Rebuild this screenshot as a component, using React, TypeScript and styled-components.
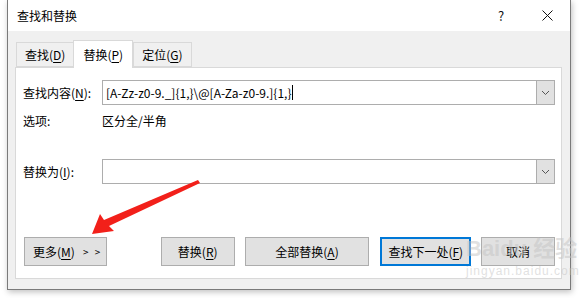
import React from "react";
import styled, { createGlobalStyle } from "styled-components";

const Global = createGlobalStyle`
  body {
    margin: 0;
    background: #ffffff;
    font-family: "Noto Sans CJK SC", "Microsoft YaHei", sans-serif;
    font-size: 12px;
    color: #000;
  }
`;

const Page = styled.div`
  position: relative;
  width: 579px;
  height: 298px;
  padding-left: 7px;
  box-sizing: border-box;
  overflow: hidden;
`;

const Window = styled.div`
  width: 564px;
  height: 290px;
  box-sizing: border-box;
  border: 1px solid #7a7a7a;
  border-top: none;
  background: #f0f0f0;
  box-shadow: 1px 2px 6px rgba(0, 0, 0, 0.25);
  display: flex;
  flex-direction: column;
`;

const TitleBar = styled.div`
  height: 31px;
  background: #ffffff;
  display: flex;
  align-items: center;
  padding-left: 9px;
  font-size: 12px;
`;

const Title = styled.div`
  flex: 1;
`;

const TitleButton = styled.div<{ w: number }>`
  width: ${(p) => p.w}px;
  height: 31px;
  display: flex;
  align-items: center;
  justify-content: center;
  font-size: 13px;
  color: #111;
`;

const Body = styled.div`
  flex: 1;
  padding: 9px 8px 10px 7px;
  display: flex;
  flex-direction: column;
`;

const Tabs = styled.div`
  display: flex;
  align-items: flex-end;
  height: 27px;
  padding-left: 1px;
`;

const Tab = styled.div<{ active?: boolean }>`
  box-sizing: border-box;
  height: ${(p) => (p.active ? 28 : 25)}px;
  margin-bottom: ${(p) => (p.active ? -1 : 0)}px;
  padding: 0 ${(p) => (p.active ? 9 : 8)}px;
  display: flex;
  align-items: center;
  background: ${(p) => (p.active ? "#ffffff" : "#f0f0f0")};
  border: 1px solid #d9d9d9;
  border-bottom: ${(p) => (p.active ? "none" : "1px solid #d9d9d9")};
  margin-left: ${(p) => (p.active ? -1 : 0)}px;
  position: relative;
  z-index: ${(p) => (p.active ? 1 : 0)};
  font-size: 12px;
`;

const U = styled.span`
  text-decoration: underline;
  text-underline-offset: 2px;
`;

const Panel = styled.div`
  flex: 1;
  background: #ffffff;
  border: 1px solid #d9d9d9;
  padding: 12px 6px 12px 7px;
  display: flex;
  flex-direction: column;
`;

const Row = styled.div<{ gap?: number }>`
  display: flex;
  align-items: center;
  margin-top: ${(p) => p.gap ?? 0}px;
`;

const OptionsRow = styled(Row)`
  height: 18px;
`;

const Label = styled.div`
  width: 79px;
  font-size: 12px;
`;

const Combo = styled.div`
  flex: 1;
  height: 25px;
  box-sizing: border-box;
  border: 1px solid #adadad;
  display: flex;
`;

const ComboText = styled.div`
  flex: 1;
  display: flex;
  align-items: center;
  padding-left: 3px;
  font-size: 12px;
  white-space: nowrap;
  overflow: hidden;
`;

const Caret = styled.span`
  display: inline-block;
  width: 1px;
  height: 15px;
  background: #000;
  margin-left: 1px;
`;

const DropButton = styled.div`
  width: 17px;
  background: #e1e1e1;
  border-left: 1px solid #adadad;
  display: flex;
  align-items: center;
  justify-content: center;
`;

const Buttons = styled.div`
  margin-top: auto;
  display: flex;
  align-items: center;
  padding-left: 1px;
`;

const Button = styled.div<{ w: number; ml?: number; focused?: boolean }>`
  width: ${(p) => p.w}px;
  margin-left: ${(p) => p.ml ?? 0}px;
  height: 29px;
  box-sizing: border-box;
  background: #e1e1e1;
  border: ${(p) => (p.focused ? "2px solid #0078d7" : "1px solid #adadad")};
  display: flex;
  align-items: center;
  justify-content: center;
  font-size: 12px;
`;

const MoreButton = styled(Button)`
  justify-content: flex-start;
  padding-left: 8px;
`;

const Chevrons = styled.span`
  margin-left: 8px;
  font-size: 10px;
  letter-spacing: 2px;
`;

const Overlay = styled.svg`
  position: absolute;
  left: 0;
  top: 0;
  pointer-events: none;
`;

const Watermark = styled.div`
  position: absolute;
  left: 466px;
  top: 238px;
  color: rgba(195, 195, 195, 0.5);
  font-family: "Liberation Sans", "Noto Sans CJK SC", sans-serif;
  pointer-events: none;
  line-height: 1;
  white-space: nowrap;
`;

const WmBig = styled.div`
  font-size: 22px;
  font-weight: bold;
`;

const WmSmall = styled.div`
  font-size: 12px;
  margin-top: 5px;
  letter-spacing: 1px;
`;

const Chevron = () => (
  <svg width="9" height="6" viewBox="0 0 9 6">
    <path d="M1 1 L4.5 4.5 L8 1" fill="none" stroke="#555" strokeWidth="1" />
  </svg>
);

export default function App() {
  return (
    <Page>
      <Global />
      <Window>
        <TitleBar>
          <Title>查找和替换</Title>
          <TitleButton w={46}>?</TitleButton>
          <TitleButton w={46}>
            <svg width="11" height="11" viewBox="0 0 11 11">
              <path d="M0.5 0.5 L10.5 10.5 M10.5 0.5 L0.5 10.5" stroke="#111" strokeWidth="1" />
            </svg>
          </TitleButton>
        </TitleBar>
        <Body>
          <Tabs>
            <Tab>
              查找(<U>D</U>)
            </Tab>
            <Tab active>
              替换(<U>P</U>)
            </Tab>
            <Tab>
              定位(<U>G</U>)
            </Tab>
          </Tabs>
          <Panel>
            <Row>
              <Label>
                查找内容(<U>N</U>):
              </Label>
              <Combo>
                <ComboText>
                  [A-Zz-z0-9._]{"{1,}"}\@[A-Za-z0-9.]{"{1,}"}
                  <Caret />
                </ComboText>
                <DropButton>
                  <Chevron />
                </DropButton>
              </Combo>
            </Row>
            <OptionsRow gap={6}>
              <Label>选项:</Label>
              <div>区分全/半角</div>
            </OptionsRow>
            <Row gap={30}>
              <Label>
                替换为(<U>I</U>):
              </Label>
              <Combo>
                <ComboText />
                <DropButton>
                  <Chevron />
                </DropButton>
              </Combo>
            </Row>
            <Buttons>
              <MoreButton w={83}>
                更多(<U>M</U>)<Chevrons>&gt; &gt;</Chevrons>
              </MoreButton>
              <Button w={74} ml={54}>
                替换(<U>R</U>)
              </Button>
              <Button w={125} ml={10}>
                全部替换(<U>A</U>)
              </Button>
              <Button w={91} ml={11} focused>
                查找下一处(<U>F</U>)
              </Button>
              <Button w={74} ml={10}>
                取消
              </Button>
            </Buttons>
          </Panel>
        </Body>
      </Window>
      <Watermark>
        <WmBig>Baidu 经验</WmBig>
        <WmSmall>jingyan.baidu.com</WmSmall>
      </Watermark>
      <Overlay width="579" height="298" viewBox="0 0 579 298">
        <path
          d="M198 180 L200 183 L109 226 L114 231 L92 234 L100 214 L104 220 Z"
          fill="#f2201a"
        />
      </Overlay>
    </Page>
  );
}
